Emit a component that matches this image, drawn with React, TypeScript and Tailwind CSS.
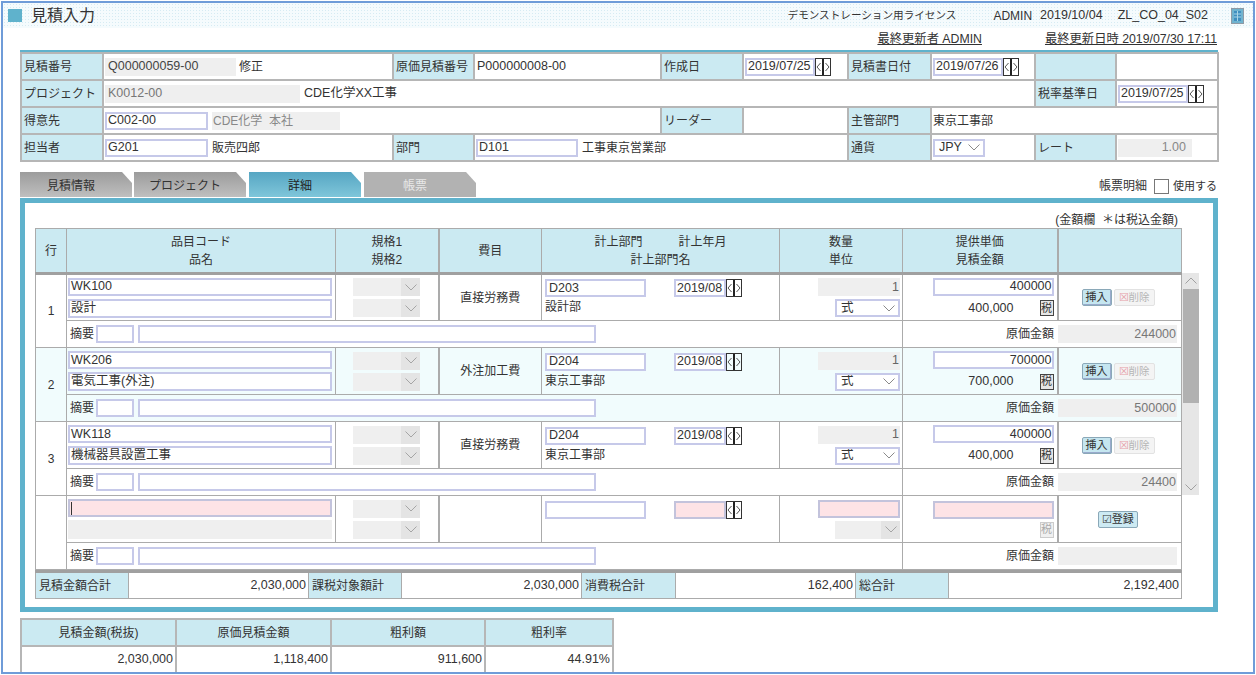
import React from "react";

const lab = "bg-[#cbeaf2] text-[12px] text-[#333] px-[2px] border-2 border-[#b6b6b6] whitespace-nowrap";
const val = "bg-white text-[12.5px] text-[#333] px-[1px] border-2 border-[#b6b6b6]";
const inputCls = "flex items-center border-2 border-[#c6c9e9] bg-white text-[12.5px] text-[#333] leading-none whitespace-nowrap overflow-hidden";
const pinkCls = "flex items-center border-2 border-[#c3c3dc] bg-[#fde3e6] text-[12.5px] leading-none";
const grayCls = "flex items-center bg-[#efefef] text-[12.5px] leading-none whitespace-nowrap";

function Chevron({ c = "#8a8a8a" }: { c?: string }) {
  return (
    <svg width="12" height="7" viewBox="0 0 12 7" fill="none" className="shrink-0">
      <path d="M0.5 0.5 L6 6 L11.5 0.5" stroke={c} strokeWidth="1" />
    </svg>
  );
}

function Spinner() {
  return (
    <svg width="16" height="18" viewBox="0 0 16 18" fill="none" className="shrink-0">
      <rect x="0.5" y="0.5" width="15" height="17" stroke="#333" strokeWidth="1" />
      <path d="M8 1 V17" stroke="#222" strokeWidth="2" />
      <path d="M5.5 5 L2 9 L5.5 13" stroke="#555" strokeWidth="1" />
      <path d="M10.5 5 L14 9 L10.5 13" stroke="#555" strokeWidth="1" />
    </svg>
  );
}

function DateField({ v, w }: { v: string; w: string }) {
  return (
    <div className="flex items-center">
      <div className={inputCls + " h-[18px] pl-[1px] " + w}>{v}</div>
      <Spinner />
    </div>
  );
}

function Sel({ children, w, disabled }: { children?: React.ReactNode; w: string; disabled?: boolean }) {
  if (disabled) {
    return (
      <div className={"flex h-[18px] bg-[#efefef] justify-end " + w}>
        <div className="w-[19px] bg-[#e4e4e4] flex items-center justify-center">
          <Chevron c="#a5a5a5" />
        </div>
      </div>
    );
  }
  return (
    <div className={inputCls + " h-[18px] justify-between pl-[4px] pr-[3px] " + w}>
      <span>{children}</span>
      <Chevron />
    </div>
  );
}

function TopTable() {
  return (
    <table className="table-fixed border-collapse w-[1197px]">
      <colgroup>
        <col className="w-[82px]" />
        <col className="w-[290px]" />
        <col className="w-[81px]" />
        <col className="w-[187px]" />
        <col className="w-[82px]" />
        <col className="w-[105px]" />
        <col className="w-[83px]" />
        <col className="w-[104px]" />
        <col className="w-[81px]" />
        <col className="w-[102px]" />
      </colgroup>
      <tbody>
        <tr className="h-[27px]">
          <td className={lab}>見積番号</td>
          <td className={val}>
            <div className="flex items-center">
              <div className={grayCls + " w-[131px] h-[18px] pl-[3px] text-[#444]"}>Q000000059-00</div>
              <span className="ml-[3px] text-[12px]">修正</span>
            </div>
          </td>
          <td className={lab}>原価見積番号</td>
          <td className={val + " pl-[2px]"}>P000000008-00</td>
          <td className={lab}>作成日</td>
          <td className={val}><DateField v="2019/07/25" w="w-[70px]" /></td>
          <td className={lab}>見積書日付</td>
          <td className={val}><DateField v="2019/07/26" w="w-[70px]" /></td>
          <td className={lab}></td>
          <td className={val}></td>
        </tr>
        <tr className="h-[27px]">
          <td className={lab}>プロジェクト</td>
          <td className={val} colSpan={7}>
            <div className="flex items-center">
              <div className={grayCls + " w-[195px] h-[18px] pl-[3px] text-[#777]"}>K0012-00</div>
              <span className="ml-[4px]">CDE化学XX工事</span>
            </div>
          </td>
          <td className={lab}>税率基準日</td>
          <td className={val}><DateField v="2019/07/25" w="w-[70px]" /></td>
        </tr>
        <tr className="h-[27px]">
          <td className={lab}>得意先</td>
          <td className={val} colSpan={3}>
            <div className="flex items-center">
              <div className={inputCls + " w-[103px] h-[18px] pl-[1px]"}>C002-00</div>
              <div className={grayCls + " ml-[4px] w-[128px] h-[18px] pl-[1px] text-[#888] text-[12px]"}>CDE化学&nbsp;&nbsp;本社</div>
            </div>
          </td>
          <td className={lab}>リーダー</td>
          <td className={val}></td>
          <td className={lab}>主管部門</td>
          <td className={val + " text-[12px]"} colSpan={3}>東京工事部</td>
        </tr>
        <tr className="h-[27px]">
          <td className={lab}>担当者</td>
          <td className={val}>
            <div className="flex items-center">
              <div className={inputCls + " w-[103px] h-[18px] pl-[1px]"}>G201</div>
              <span className="ml-[4px] text-[12px]">販売四郎</span>
            </div>
          </td>
          <td className={lab}>部門</td>
          <td className={val} colSpan={3}>
            <div className="flex items-center">
              <div className={inputCls + " w-[102px] h-[18px] pl-[1px]"}>D101</div>
              <span className="ml-[4px] text-[12px]">工事東京営業部</span>
            </div>
          </td>
          <td className={lab}>通貨</td>
          <td className={val}><Sel w="w-[52px]">JPY</Sel></td>
          <td className={lab}>レート</td>
          <td className={val}>
            <div className={grayCls + " w-[74px] h-[18px] justify-end pr-[6px] text-[#888]"}>1.00</div>
          </td>
        </tr>
      </tbody>
    </table>
  );
}

function Tab({ label, tone }: { label: string; tone: "gray" | "active" | "off" }) {
  const toneCls =
    tone === "active"
      ? "bg-gradient-to-b from-[#56a6c3] to-[#7fc6da] text-[#222]"
      : tone === "off"
        ? "bg-[#b2b2b2] text-[#e8e8e8]"
        : "bg-gradient-to-b from-[#9c9c9c] to-[#bfbfbf] text-[#333]";
  return (
    <div
      className={
        "w-[112px] h-[25px] flex items-center justify-center pr-[10px] pt-[2px] text-[12px] [clip-path:polygon(0_0,102px_0,100%_11px,100%_100%,0_100%)] " +
        toneCls
      }
    >
      {label}
    </div>
  );
}

type Row = { code: string; name: string; fee: string; dep: string; depName: string; price: string; amount: string; cost: string; bg: string };
const rows: Row[] = [
  { code: "WK100", name: "設計", fee: "直接労務費", dep: "D203", depName: "設計部", price: "400000", amount: "400,000", cost: "244000", bg: "bg-white" },
  { code: "WK206", name: "電気工事(外注)", fee: "外注加工費", dep: "D204", depName: "東京工事部", price: "700000", amount: "700,000", cost: "500000", bg: "bg-[#f1fcfd]" },
  { code: "WK118", name: "機械器具設置工事", fee: "直接労務費", dep: "D204", depName: "東京工事部", price: "400000", amount: "400,000", cost: "24400", bg: "bg-white" },
];

const cell = "border border-[#ababab] p-0 align-middle text-[12px] text-[#333]";
const headCell = "border border-[#ababab] border-b-[3px] border-b-[#a0a0a0] p-0 bg-[#cbeaf2] text-center align-middle text-[12px] text-[#333] leading-[18px]";

function Summary({ bg, cost }: { bg: string; cost?: string }) {
  return (
    <tr className={"h-[27px] " + bg}>
      <td className={cell} colSpan={5}>
        <div className="flex items-center pl-[3px]">
          <span className="w-[26px]">摘要</span>
          <div className={inputCls + " h-[18px] w-[38px]"} />
          <div className={inputCls + " h-[18px] w-[458px] ml-[4px]"} />
        </div>
      </td>
      <td className={cell} colSpan={2}>
        <div className="flex items-center pr-[4px]">
          <span className="w-[151px] text-right">原価金額</span>
          <div className={grayCls + " ml-[4px] w-[119px] h-[18px] justify-end pr-[1px] text-[#777]"}>{cost}</div>
        </div>
      </td>
    </tr>
  );
}

function DataRow({ r, i }: { r: Row; i: number }) {
  return (
    <>
      <tr className={"h-[47px] " + r.bg}>
        <td className={cell + " text-center text-[12.5px]"} rowSpan={2}>{i + 1}</td>
        <td className={cell}>
          <div className="flex flex-col gap-[3px] pl-[1px] pr-[3px]">
            <div className={inputCls + " h-[18px] pl-[1px]"}>{r.code}</div>
            <div className={inputCls + " h-[19px] pl-[1px]"}>{r.name}</div>
          </div>
        </td>
        <td className={cell}>
          <div className="flex flex-col gap-[3px] pl-[17px]">
            <Sel w="w-[67px]" disabled />
            <Sel w="w-[67px]" disabled />
          </div>
        </td>
        <td className={cell + " text-center border-l-2"}>{r.fee}</td>
        <td className={cell}>
          <div className="flex flex-col pl-[3px]">
            <div className="flex items-center">
              <div className={inputCls + " h-[18px] w-[101px] pl-[2px]"}>{r.dep}</div>
              <div className="ml-[28px]"><DateField v="2019/08" w="w-[52px]" /></div>
            </div>
            <div className="mt-[2px] leading-[17px]">{r.depName}</div>
          </div>
        </td>
        <td className={cell}>
          <div className="flex flex-col gap-[3px] items-end pr-[2px]">
            <div className={grayCls + " w-[82px] h-[18px] justify-end pr-[1px] text-[#666]"}>1</div>
            <Sel w="w-[65px]">式</Sel>
          </div>
        </td>
        <td className={cell}>
          <div className="flex flex-col items-end pr-[3px]">
            <div className={inputCls + " w-[121px] h-[18px] justify-end"}>{r.price}</div>
            <div className="flex items-center mt-[3px] text-[12.5px]">
              <span>{r.amount}</span>
              <div className="ml-[26px] w-[14px] h-[16px] border border-[#444] bg-[#e6e6e6] flex items-center justify-center text-[11px] leading-none">税</div>
            </div>
          </div>
        </td>
        <td className={cell + " border-l-2"}>
          <div className="flex items-center pl-[23px]">
            <div className="w-[30px] h-[17px] rounded-[2px] border border-[#8aa8b8] bg-[#c5e6f0] flex items-center justify-center text-[11px] leading-none shadow-[inset_-1px_-1px_0_#99aacc]">挿入</div>
            <div className="ml-[2px] w-[41px] h-[17px] rounded-[2px] border border-[#e2e2e2] bg-[#f4f4f4] flex items-center justify-center text-[10.5px] leading-none text-[#b5b5b5]">
              <span className="text-[#e6a0a8]">☒</span>削除
            </div>
          </div>
        </td>
      </tr>
      <Summary bg={r.bg} cost={r.cost} />
    </>
  );
}

function BlankRow() {
  return (
    <>
      <tr className="h-[47px] bg-white">
        <td className={cell} rowSpan={2}></td>
        <td className={cell}>
          <div className="flex flex-col gap-[3px] pl-[1px] pr-[3px]">
            <div className={pinkCls + " h-[18px] pl-[1px]"}>
              <div className="w-px h-[13px] bg-[#333]" />
            </div>
            <div className={grayCls + " h-[19px]"} />
          </div>
        </td>
        <td className={cell}>
          <div className="flex flex-col gap-[3px] pl-[17px]">
            <Sel w="w-[67px]" disabled />
            <Sel w="w-[67px]" disabled />
          </div>
        </td>
        <td className={cell + " border-l-2"}></td>
        <td className={cell}>
          <div className="flex items-center pl-[3px] pb-[19px] pt-[1px]">
            <div className={inputCls + " h-[18px] w-[101px]"} />
            <div className="ml-[28px] flex items-center">
              <div className={pinkCls + " h-[18px] w-[52px]"} />
              <Spinner />
            </div>
          </div>
        </td>
        <td className={cell}>
          <div className="flex flex-col gap-[3px] items-end pr-[2px]">
            <div className={pinkCls + " w-[82px] h-[18px]"} />
            <Sel w="w-[65px]" disabled />
          </div>
        </td>
        <td className={cell}>
          <div className="flex flex-col items-end pr-[3px]">
            <div className={pinkCls + " w-[121px] h-[18px]"} />
            <div className="mt-[3px] w-[14px] h-[16px] border border-[#ccc] bg-[#f0f0f0] flex items-center justify-center text-[11px] leading-none text-[#aaa]">税</div>
          </div>
        </td>
        <td className={cell + " border-l-2"}>
          <div className="flex justify-center pr-[4px]">
            <div className="w-[40px] h-[17px] rounded-[2px] border border-[#8aa8b8] bg-[#cdeaf3] flex items-center justify-center text-[11px] leading-none">☑登録</div>
          </div>
        </td>
      </tr>
      <Summary bg="bg-white" />
    </>
  );
}

function Scrollbar() {
  return (
    <div className="mt-[45px] w-[17px] h-[222px] bg-[#e6e6e6] flex flex-col items-center">
      <div className="h-[16px] flex items-center justify-center rotate-180"><Chevron c="#a0a0a0" /></div>
      <div className="w-[16px] h-[114px] bg-[#b1b1b1]" />
      <div className="flex-1" />
      <div className="h-[16px] flex items-center justify-center"><Chevron c="#a0a0a0" /></div>
    </div>
  );
}

function DetailTable() {
  return (
    <table className="table-fixed border-collapse w-[1146px]">
      <colgroup>
        <col className="w-[31px]" />
        <col className="w-[269px]" />
        <col className="w-[103px]" />
        <col className="w-[103px]" />
        <col className="w-[238px]" />
        <col className="w-[123px]" />
        <col className="w-[155px]" />
        <col className="w-[124px]" />
      </colgroup>
      <thead>
        <tr className="h-[45px]">
          <th className={headCell + " font-normal"}>行</th>
          <th className={headCell + " font-normal"}>品目コード<br />品名</th>
          <th className={headCell + " font-normal"}>規格1<br />規格2</th>
          <th className={headCell + " font-normal border-l-2"}>費目</th>
          <th className={headCell + " font-normal"}>
            <div className="flex justify-center gap-[36px]"><span>計上部門</span><span>計上年月</span></div>
            計上部門名
          </th>
          <th className={headCell + " font-normal"}>数量<br />単位</th>
          <th className={headCell + " font-normal"}>提供単価<br />見積金額</th>
          <th className={headCell + " font-normal border-l-2"}></th>
        </tr>
      </thead>
      <tbody>
        {rows.map((r, i) => <DataRow key={i} r={r} i={i} />)}
        <BlankRow />
      </tbody>
    </table>
  );
}

const tl = "border border-[#ababab] bg-[#cbeaf2] px-[3px] text-[12px] text-[#333]";
const tv = "border border-[#ababab] bg-white text-right pr-[2px] text-[12.5px] text-[#333]";

function Totals() {
  return (
    <table className="table-fixed border-collapse w-[1146px] border-t-[3px] border-t-[#a0a0a0]">
      <colgroup>
        <col className="w-[93px]" />
        <col className="w-[180px]" />
        <col className="w-[93px]" />
        <col className="w-[180px]" />
        <col className="w-[94px]" />
        <col className="w-[180px]" />
        <col className="w-[93px]" />
        <col className="w-[233px]" />
      </colgroup>
      <tbody>
        <tr className="h-[27px]">
          <td className={tl}>見積金額合計</td>
          <td className={tv}>2,030,000</td>
          <td className={tl}>課税対象額計</td>
          <td className={tv}>2,030,000</td>
          <td className={tl}>消費税合計</td>
          <td className={tv}>162,400</td>
          <td className={tl}>総合計</td>
          <td className={tv}>2,192,400</td>
        </tr>
      </tbody>
    </table>
  );
}

function Margin() {
  const heads = ["見積金額(税抜)", "原価見積金額", "粗利額", "粗利率"];
  const vals = ["2,030,000", "1,118,400", "911,600", "44.91%"];
  return (
    <table className="table-fixed border-collapse w-[592px] mt-[6px]">
      <colgroup>
        <col className="w-[155px]" />
        <col className="w-[155px]" />
        <col className="w-[154px]" />
        <col className="w-[128px]" />
      </colgroup>
      <tbody>
        <tr className="h-[27px]">
          {heads.map((h) => (
            <td key={h} className="border-2 border-[#b6b6b6] bg-[#cbeaf2] text-center text-[12px] text-[#333]">{h}</td>
          ))}
        </tr>
        <tr className="h-[27px]">
          {vals.map((v) => (
            <td key={v} className="border-2 border-[#b6b6b6] bg-white text-right pr-[2px] text-[12.5px] text-[#333]">{v}</td>
          ))}
        </tr>
      </tbody>
    </table>
  );
}

export default function App() {
  return (
    <div className="w-[1256px] h-[675px] bg-white p-px overflow-hidden [font-family:'Liberation_Sans','Noto_Sans_CJK_JP',sans-serif]">
      <div className="h-[673px] border-2 border-[#6f9cd8] overflow-hidden">
        <header className="h-[25px] flex items-center bg-[#f5fbfd] bg-[radial-gradient(#d6ebf3_0.7px,transparent_0.8px)] bg-[length:3px_3px] pl-[5px] pr-[9px] text-[#333]">
          <div className="w-[14px] h-[13px] bg-[#5fb2cc]" />
          <h1 className="ml-[9px] text-[16px] font-normal leading-none">見積入力</h1>
          <div className="flex-1" />
          <span className="text-[10.6px]">デモンストレーション用ライセンス</span>
          <span className="ml-[37px] text-[12px]">ADMIN</span>
          <span className="ml-[8px] text-[12.5px]">2019/10/04</span>
          <span className="ml-[15px] text-[12.5px]">ZL_CO_04_S02</span>
          <svg width="13" height="16" viewBox="0 0 13 16" className="ml-[23px]">
            <rect x="0.5" y="0.5" width="12" height="15" fill="#6fb3cf" stroke="#8f9aa5" />
            <rect x="3" y="3" width="7" height="10" fill="#3f8fc0" />
            <path d="M3 6 H10 M3 9 H10 M6.5 3 V13" stroke="#a8d4e6" strokeWidth="1" />
          </svg>
        </header>

        <div className="pl-[17px] w-[1215px]">
          <div className="h-[22px] flex items-center justify-end gap-[63px] pr-[1px] text-[12.3px] text-[#333] underline">
            <span>最終更新者 ADMIN</span>
            <span>最終更新日時 2019/07/30 17:11</span>
          </div>

          <div className="h-[2px] w-[1198px] bg-[#5fb2cc]" />
          <TopTable />

          <div className="mt-[10px] h-[25px] flex items-start">
            <div className="flex gap-[3px]">
              <div className="-mr-px"><Tab label="見積情報" tone="gray" /></div>
              <Tab label="プロジェクト" tone="gray" />
              <Tab label="詳細" tone="active" />
              <Tab label="帳票" tone="off" />
            </div>
            <div className="flex-1" />
            <div className="flex items-center text-[12px] text-[#333] pr-[1px] pt-[5px]">
              <span>帳票明細</span>
              <div className="ml-[7px] w-[15px] h-[15px] border border-[#777] bg-white" />
              <span className="ml-[4px] text-[11px]">使用する</span>
            </div>
          </div>

          <section className="mt-px h-[414px] border-[5px] border-[#5fb2cc] pl-[10px] pt-[9px]">
            <div className="w-[1143px] h-[16px] text-right text-[12px] leading-[16px] text-[#333]">(金額欄&nbsp;&nbsp;＊は税込金額)</div>
            <div className="flex">
              <div>
                <DetailTable />
                <Totals />
              </div>
              <Scrollbar />
            </div>
          </section>

          <Margin />
        </div>
      </div>
    </div>
  );
}
